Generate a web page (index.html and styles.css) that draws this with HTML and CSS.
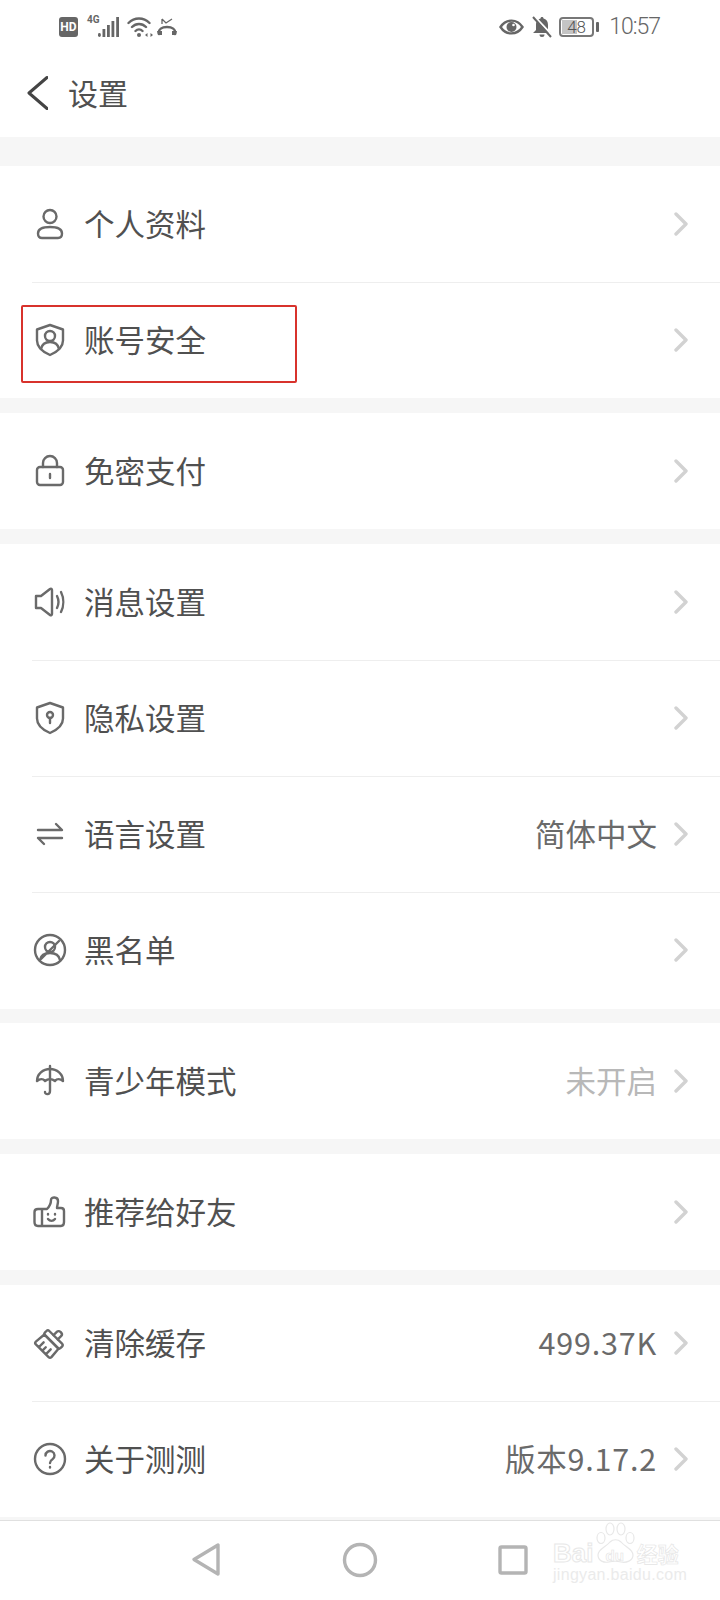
FILE: index.html
```html
<!DOCTYPE html>
<html lang="zh-CN">
<head>
<meta charset="utf-8">
<title>设置</title>
<link rel="stylesheet" href="styles.css">
</head>
<body>
<div class="page">
  <div class="status">
    <div class="status-side">
      <span class="hd">HD</span>
      <span class="net"><span class="net-label">4G</span>
        <svg class="signal" viewBox="0 0 21 20" width="21" height="20"><rect x="0" y="16" width="2.800" height="4" rx="1.400"/><rect x="4.500" y="12" width="2.800" height="8"/><rect x="9" y="8" width="2.800" height="12"/><rect x="13.500" y="4" width="2.800" height="16"/><rect x="18.200" y="0" width="2.800" height="20"/></svg>
      </span>
      <svg class="st-icon" viewBox="0 0 26 20" width="26" height="20"><path class="st-line" d="M1.500 6c6-6 15-6 21 0M5 10c4-4 10-4 14 0M8.500 14c2-2 5-2 7 0"/><circle class="st-fill" cx="12" cy="18" r="2"/><path class="st-fill" d="M18 18l2.500-2v4zM26 18l-2.500-2v4z"/></svg>
      <svg class="st-icon st-call" viewBox="0 0 20 19" width="20" height="19"><path class="st-line" d="M2 16c-1-5 3-7 8-7s9 2 8 7"/><path class="st-fill" d="M0 13h5v4H1zM15 13h5l-1 4h-4z"/><path class="st-thin" d="M5 1v5M5 1l4 4 6-4"/></svg>
    </div>
    <div class="status-side status-right">
      <svg class="st-icon" viewBox="0 0 25 16" width="25" height="16"><path class="st-line" d="M1.500 8c5.500-8.500 16.500-8.500 22 0-5.500 8.500-16.500 8.500-22 0z"/><circle class="st-fill" cx="12.500" cy="8" r="5"/><circle class="st-dot" cx="14.500" cy="6" r="1.300"/></svg>
      <svg class="st-icon" viewBox="0 0 20 22" width="20" height="22"><path class="st-fill" d="M10 1c1 0 1.500 .7 1.500 1.500C15 3.500 16 6 16 9v5l3 3H1l3-3V9c0-3 1-5.500 4.500-6.500C8.500 1.700 9 1 10 1zM7.500 18.500h5a2.500 2.500 0 0 1-5 0z"/><path class="st-gap" d="M3 1l18 19"/><path class="st-slash" d="M1 1l18 20"/></svg>
      <span class="battery"><span class="battery-body"><span class="battery-fill"></span><span class="battery-text">48</span></span><span class="battery-nub"></span></span>
      <span class="time">10:57</span>
    </div>
  </div>

  <header class="header">
    <svg class="back" viewBox="0 0 21 34" width="21" height="34"><path d="M20 1.500L2 17l18 15.500"/></svg>
    <h1 class="title">设置</h1>
  </header>

  <main class="list">
    <section class="group">
      <div class="row">
        <svg class="icon" viewBox="0 0 36 36" width="36" height="36"><circle cx="18" cy="10.500" r="6.500"/><path d="M6 27.500c0-4 4-6.500 12-6.500s12 2.500 12 6.500c0 3-1.500 4.500-4 4.500H10c-2.500 0-4-1.500-4-4.500z"/></svg>
        <span class="label">个人资料</span>
        <svg class="chev" viewBox="0 0 14 24" width="14" height="24"><path d="M2 2l10 10L2 22"/></svg>
      </div>
      <div class="row row-marked">
        <svg class="icon" viewBox="0 0 36 36" width="36" height="36"><path d="M18 3l13 4.500v11c0 7-6 11.500-13 14.500C11 30 5 25.500 5 18.500v-11z"/><circle cx="18" cy="14" r="5"/><path d="M9 27c1-5 5-7 9-7s8 2 9 7"/></svg>
        <span class="label">账号安全</span>
        <svg class="chev" viewBox="0 0 14 24" width="14" height="24"><path d="M2 2l10 10L2 22"/></svg>
        <span class="mark"></span>
      </div>
    </section>

    <section class="group">
      <div class="row">
        <svg class="icon" viewBox="0 0 36 36" width="36" height="36"><rect x="5" y="14" width="26" height="18" rx="3"/><path d="M11 14v-4a7 7 0 0 1 14 0v4M18 21v4"/></svg>
        <span class="label">免密支付</span>
        <svg class="chev" viewBox="0 0 14 24" width="14" height="24"><path d="M2 2l10 10L2 22"/></svg>
      </div>
    </section>

    <section class="group">
      <div class="row">
        <svg class="icon" viewBox="0 0 36 36" width="36" height="36"><path d="M4 12h5l9-7c1-.7 2 0 2 1v24c0 1-1 1.700-2 1l-9-7H4z"/><path d="M25 12c2 4 2 8 0 12M29 8c3 6 3 14 0 20"/></svg>
        <span class="label">消息设置</span>
        <svg class="chev" viewBox="0 0 14 24" width="14" height="24"><path d="M2 2l10 10L2 22"/></svg>
      </div>
      <div class="row">
        <svg class="icon" viewBox="0 0 36 36" width="36" height="36"><path d="M18 3l13 4.500v11c0 7-6 11.500-13 14.500C11 30 5 25.500 5 18.500v-11z"/><circle cx="18" cy="15" r="3"/><path d="M18 18v5"/></svg>
        <span class="label">隐私设置</span>
        <svg class="chev" viewBox="0 0 14 24" width="14" height="24"><path d="M2 2l10 10L2 22"/></svg>
      </div>
      <div class="row">
        <svg class="icon" viewBox="0 0 36 36" width="36" height="36"><path d="M6 14h24l-6-6M30 22H6l6 6"/></svg>
        <span class="label">语言设置</span>
        <span class="value">简体中文</span>
        <svg class="chev" viewBox="0 0 14 24" width="14" height="24"><path d="M2 2l10 10L2 22"/></svg>
      </div>
      <div class="row">
        <svg class="icon" viewBox="0 0 36 36" width="36" height="36"><circle cx="18" cy="18" r="15"/><circle cx="18" cy="15" r="5"/><path d="M8 28c1-5 5-7 10-7s9 2 10 7M9 27L27 9"/></svg>
        <span class="label">黑名单</span>
        <svg class="chev" viewBox="0 0 14 24" width="14" height="24"><path d="M2 2l10 10L2 22"/></svg>
      </div>
    </section>

    <section class="group">
      <div class="row">
        <svg class="icon" viewBox="0 0 36 36" width="36" height="36"><path d="M5 18c0-7 6-12 13-12s13 5 13 12c-3-2.500-6-2.500-8 0-3-2.500-7-2.500-10 0-2-2.500-5-2.500-8 0z"/><path d="M18 3v25c0 4-5 4-5 1"/></svg>
        <span class="label">青少年模式</span>
        <span class="value value-off">未开启</span>
        <svg class="chev" viewBox="0 0 14 24" width="14" height="24"><path d="M2 2l10 10L2 22"/></svg>
      </div>
    </section>

    <section class="group">
      <div class="row">
        <svg class="icon" viewBox="0 0 36 36" width="36" height="36"><path d="M11 15h4c2-2 4-5 4-9 0-3.500 7-3.500 7 1 0 3-1 5-1 7h4c2 0 3 1 3 3v11c0 2-1 4-3 4H6c-2 0-3.500-1.500-3.500-4V18c0-2 1.500-3 3.500-3h5zM10 15v17"/><path d="M16 25c2 2.500 5 2.500 7 0"/><path d="M16 20v.5M23 20v.5"/></svg>
        <span class="label">推荐给好友</span>
        <svg class="chev" viewBox="0 0 14 24" width="14" height="24"><path d="M2 2l10 10L2 22"/></svg>
      </div>
    </section>

    <section class="group">
      <div class="row">
        <svg class="icon" viewBox="0 0 36 36" width="36" height="36"><g transform="rotate(45 18 18)"><path d="M15 10V5c0-3 6-3 6 0v5"/><rect x="7" y="10" width="22" height="6" rx="2"/><path d="M8 16h20l1 11c0 1-1 2-2 2H9c-1 0-2-1-2-2zM13 29v-7M18 29v-5M23 29v-7"/></g></svg>
        <span class="label">清除缓存</span>
        <span class="value value-num">499.37K</span>
        <svg class="chev" viewBox="0 0 14 24" width="14" height="24"><path d="M2 2l10 10L2 22"/></svg>
      </div>
      <div class="row">
        <svg class="icon" viewBox="0 0 36 36" width="36" height="36"><circle cx="18" cy="18" r="15"/><path d="M13.500 14.500a4.500 4.500 0 1 1 7 3.700c-1.600 1-2.500 2-2.500 3.800M18 26v.5"/></svg>
        <span class="label">关于测测</span>
        <span class="value value-num">版本9.17.2</span>
        <svg class="chev" viewBox="0 0 14 24" width="14" height="24"><path d="M2 2l10 10L2 22"/></svg>
      </div>
    </section>
  </main>

  <nav class="nav">
    <svg class="nav-icon" viewBox="0 0 30 35" width="30" height="35"><path d="M27 3v29L3 17.500z"/></svg>
    <svg class="nav-icon nav-home" viewBox="0 0 36 36" width="36" height="36"><circle cx="18" cy="18" r="15.500"/></svg>
    <svg class="nav-icon nav-recent" viewBox="0 0 32 32" width="32" height="32"><rect x="3" y="3" width="26" height="26" rx="1.500"/></svg>
    <div class="watermark">
      <svg class="paw" viewBox="0 0 40 42" width="40" height="42"><ellipse cx="6" cy="16" rx="4" ry="5.500"/><ellipse cx="15" cy="7" rx="4" ry="6"/><ellipse cx="26" cy="7" rx="4" ry="6"/><ellipse cx="35" cy="16" rx="4" ry="5.500"/><path d="M3 33c0-6 8-8 12-13 3-3 8-3 11 0 4 5 12 7 12 13 0 6-7 8-12 7-4-1-8-1-12 0-5 1-11-1-11-7z"/></svg>
      <div class="wm-top"><span class="wm-bai">Bai</span><span class="wm-du">du</span><span class="wm-cn">经验</span></div>
      <div class="wm-url">jingyan.baidu.com</div>
    </div>
  </nav>
</div>
</body>
</html>
```

FILE: styles.css
```css
* { box-sizing: border-box; }
html, body { margin: 0; padding: 0; }
body { background: #fff; font-family: "Noto Sans CJK SC", "Noto Sans", sans-serif; }

.page { width: 720px; height: 1600px; display: flex; flex-direction: column; background: #fff; overflow: hidden; }

/* status bar */
.status { height: 54px; padding: 0 60px 0 59px; display: flex; justify-content: space-between; align-items: center; flex: none; }
.status-side { display: flex; align-items: center; gap: 8px; }
.hd { width: 19px; height: 20px; margin-right: 1px; border-radius: 3px; background: #666; color: #fff; font: 700 12px/20px "Roboto", sans-serif; text-align: center; }
.net { position: relative; display: flex; width: 32px; justify-content: flex-end; }
.net-label { position: absolute; left: 0; top: -3px; font: 700 10px/12px "Roboto", sans-serif; color: #666; }
.signal { fill: #666; }
.st-icon { display: block; }
.st-call { margin-left: -4px; }
.st-line { fill: none; stroke: #666; stroke-width: 2.400; stroke-linecap: round; }
.st-thin { fill: none; stroke: #666; stroke-width: 1.300; }
.st-fill { fill: #666; }
.st-dot { fill: #fff; }
.st-slash { fill: none; stroke: #666; stroke-width: 2; }
.st-gap { fill: none; stroke: #fff; stroke-width: 2; }
.battery { display: flex; align-items: center; gap: 2px; margin-left: -1px; }
.battery-body { position: relative; width: 35px; height: 20px; border: 2px solid #777; border-radius: 4px; display: flex; align-items: center; justify-content: center; overflow: hidden; }
.battery-fill { position: absolute; left: 1px; top: 1px; bottom: 1px; width: 15px; background: #c4c4c4; }
.battery-text { position: relative; font: 300 17px/17px "Roboto", sans-serif; color: #555; }
.battery-nub { width: 3px; height: 10px; background: #666; border-radius: 1px; }
.time { font: 300 23px/30px "Roboto", sans-serif; letter-spacing: -1px; color: #666; margin-left: 2px; }

/* header */
.header { height: 83px; padding-left: 27px; display: flex; align-items: center; gap: 20px; flex: none; }
.back { fill: none; stroke: #444; stroke-width: 3; stroke-linecap: round; stroke-linejoin: round; margin-top: -6px; }
.title { margin: -7px 0 0; font-size: 30px; font-weight: 400; line-height: 40px; color: #505050; }

/* list */
.list { flex: 1; background: #f6f6f6; padding-top: 29px; display: flex; flex-direction: column; gap: 14.600px; }
.group { background: #fff; padding-left: 32px; }
.row { position: relative; height: 116.200px; padding-right: 32px; display: flex; align-items: center; box-shadow: 0 1px 0 #eeeeee; }
.row:last-child { box-shadow: none; }
.icon { flex: none; fill: none; stroke: #6a6a6a; stroke-width: 2.400; stroke-linecap: round; stroke-linejoin: round; margin-right: 16px; }
.label { flex: 1; font-size: 30.500px; line-height: 40px; color: #505050; margin-top: -2px; }
.value { font-size: 30.500px; line-height: 40px; color: #6a6a6a; margin: -2px 17px 0 0; }
.value-off { color: #b8b8b8; }
.value-num { letter-spacing: .8px; }
.chev { flex: none; fill: none; stroke: #d2d2d2; stroke-width: 3.400; stroke-linecap: round; stroke-linejoin: round; }
.mark { position: absolute; left: -11px; top: 23px; width: 276px; height: 78px; border: 2px solid #d8322c; border-radius: 2px; }

/* navigation bar */
.nav { position: relative; height: 80px; flex: none; background: #fff; border-top: 1px solid #e0e0e0; display: flex; align-items: center; padding: 0 0 2px 191px; }
.nav-icon { flex: none; fill: none; stroke: #b4b4b4; stroke-width: 3.400; stroke-linejoin: round; }
.nav-home { margin-left: 121px; }
.nav-recent { margin-left: 119px; }
.watermark { position: absolute; left: 553px; top: 21px; width: 130px; white-space: nowrap; }
.paw { position: absolute; left: 42px; top: -20px; fill: #fff; stroke: #e8e8e8; stroke-width: 1.200; }
.wm-top { position: relative; display: flex; align-items: center; height: 22px; }
.wm-bai { font: 700 26px/22px "Liberation Sans", sans-serif; color: #fff; -webkit-text-stroke: 1px #e8e8e8; }
.wm-du { font: 700 15px/18px "Liberation Sans", sans-serif; color: #fff; -webkit-text-stroke: .6px #e4e4e4; margin: 6px 0 0 12px; }
.wm-cn { font-size: 21px; line-height: 22px; font-weight: 700; color: #fff; -webkit-text-stroke: .6px #e4e4e4; margin-left: 13px; }
.wm-url { font: 400 16px/18px "Liberation Sans", sans-serif; color: #ebebeb; margin-top: 2px; letter-spacing: .3px; }
```
